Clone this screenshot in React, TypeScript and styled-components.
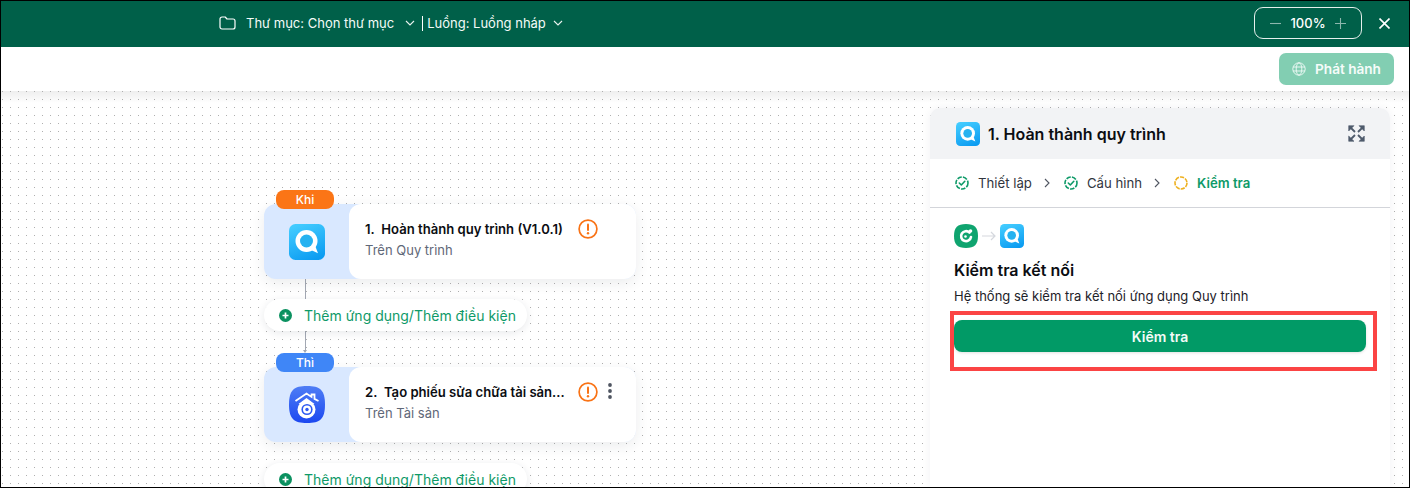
import React from "react";
import styled, { createGlobalStyle } from "styled-components";

const Global = createGlobalStyle`
  html, body { margin: 0; padding: 0; background: #fff; }
  body { font-family: Inter, "Noto Sans", "Liberation Sans", sans-serif; }
  * { box-sizing: border-box; }
`;

const Frame = styled.div`
  width: 1410px; height: 488px; border: 1px solid #000;
  display: flex; flex-direction: column; overflow: hidden; position: relative; background: #fff;
`;
const TopBar = styled.header`
  height: 46px; flex: none; background: #006049; color: #fff;
  display: flex; align-items: center; padding: 0 19px 2px 218px;
`;
const Crumb = styled.div`
  display: flex; align-items: center; font-size: 13px; line-height: 16px; white-space: nowrap; color: #f4fbf8;
`;
const CrumbText = styled.span<{ $ml: number }>`margin-left: ${p => p.$ml}px;`;
const Gap = styled.span<{ $w: number }>`width: ${p => p.$w}px;`;
const Divider = styled.span`width: 1px; height: 15px; background: #fff; margin: 0 4px 0 7px;`;
const Spacer = styled.div`flex: 1;`;
const Zoom = styled.div`
  width: 108px; height: 32px; border: 1px solid #e6efec; border-radius: 9px;
  display: flex; align-items: center; justify-content: space-between; padding: 0 15px;
  font-size: 13px; font-weight: 500; margin-right: 17px;
`;
const Faded = styled.span`display: flex; opacity: .55;`;
const ToolRow = styled.div`
  height: 44px; flex: none; background: #fff; display: flex; justify-content: flex-end; align-items: flex-start;
  padding: 6px 15px 0 0; position: relative; z-index: 2;
`;
const Publish = styled.button`
  width: 115px; height: 32px; border: 0; border-radius: 7px; background: #82ceb2; color: #f6fcfa;
  font: 600 13.6px Inter, sans-serif; display: flex; align-items: center; justify-content: center; gap: 9px; padding: 0;
`;
const Canvas = styled.main`
  flex: 1; position: relative; overflow: hidden;
  background-color: #fff;
  background-image:
    radial-gradient(circle at 0.5px 0.5px, #afafaf 0.6px, transparent 0.6px),
    linear-gradient(#eeeeee, #ffffff);
  background-size: 8px 8px, 100% 12px;
  background-position: 1px 0, 0 0;
  background-repeat: repeat, no-repeat;
`;
const Node = styled.section<{ $top: number }>`
  position: absolute; left: 263px; top: ${p => p.$top}px; width: 372px; height: 75px;
  background: #d9e8ff; border-radius: 12px; box-shadow: 0 4px 14px rgba(30,40,60,.09);
  display: flex;
`;
const NodeIcon = styled.div`width: 85px; flex: none; display: flex; align-items: center; justify-content: center;`;
const NodeBody = styled.div`
  flex: 1; background: #fff; border-radius: 12px; padding: 15px 0 0 16px; display: flex; position: relative;
`;
const NodeText = styled.div`width: 213px;`;
const NodeTitle = styled.div`
  font-size: 13.1px; font-weight: 600; line-height: 18px; color: #0b0d12; white-space: nowrap; padding-top: 1px;
`;
const NodeSub = styled.div`font-size: 13px; line-height: 16px; color: #5f6878; margin-top: 4px;`;
const NodeActions = styled.div`display: flex; align-items: flex-start; gap: 9px;`;
const Tag = styled.div<{ $bg: string }>`
  position: absolute; left: 12px; top: -14px; width: 58px; height: 19px; border-radius: 8px;
  background: ${p => p.$bg}; color: #fff; font-size: 12px; line-height: 19px; text-align: center; font-weight: 500;
`;
const AddPill = styled.div<{ $top: number }>`
  position: absolute; left: 263px; top: ${p => p.$top}px; width: 263px; height: 32px; border-radius: 16px;
  background: #fff; box-shadow: 0 2px 8px rgba(30,40,60,.1);
  display: flex; align-items: center; padding: 1px 0 0 15px; gap: 12px;
  font-size: 14px; color: #0e9a68; white-space: nowrap;
`;
const Connector = styled.div<{ $top: number; $h: number }>`
  position: absolute; left: 304px; top: ${p => p.$top}px; width: 1px; height: ${p => p.$h}px; background: #a3a8b3;
`;
const ArrowHead = styled.div`
  position: absolute; left: 302px; top: 259px; width: 0; height: 0;
  border-left: 2.5px solid transparent; border-right: 2.5px solid transparent; border-top: 3px solid #a3a8b3;
`;
const Panel = styled.aside`
  position: absolute; left: 929px; top: 17px; width: 460px; bottom: 0; background: #fff;
  border-radius: 10px 10px 0 0; box-shadow: 0 0 10px rgba(30,40,60,.06);
  display: flex; flex-direction: column;
`;
const PanelHead = styled.div`
  height: 51px; flex: none; background: #f2f3f5; border-radius: 10px 10px 0 0;
  display: flex; align-items: center; padding: 0 25px 0 26px; gap: 8px;
`;
const PanelTitle = styled.h2`margin: 0; flex: 1; font-size: 16px; font-weight: 600; color: #0b0d12;`;
const Steps = styled.nav`
  height: 49px; flex: none; border-bottom: 1px solid #d3d5da;
  display: flex; align-items: center; padding: 0 0 0 25px; font-size: 13.2px; color: #30353e;
`;
const Step = styled.span<{ $active?: boolean }>`
  display: flex; align-items: center; gap: 9px; white-space: nowrap;
  ${p => p.$active ? "color:#0e9a68;font-weight:600;" : ""}
`;
const Sep = styled.span`display: flex; margin: 0 14px 0 12px;`;
const PanelBody = styled.div`padding: 16px 24px 0; display: flex; flex-direction: column;`;
const Flow = styled.div`display: flex; align-items: center; gap: 4px; height: 24px;`;
const BodyTitle = styled.h3`margin: 11px 0 0; font-size: 16px; line-height: 22px; font-weight: 600; color: #0b0d12;`;
const BodyText = styled.p`margin: 6px 0 0; font-size: 13px; line-height: 18px; color: #1e2229;`;
const CheckWrap = styled.div`position: relative; margin-top: 15px;`;
const CheckButton = styled.button`
  width: 100%; height: 32px; border: 0; border-radius: 8px; background: #019a66; color: #f4fbf8;
  font: 600 14px Inter, sans-serif; display: block; box-shadow: 0 1px 3px rgba(0,0,0,.12);
`;
const Highlight = styled.div`
  position: absolute; left: -4px; right: -11px; top: -9px; height: 60px; border: 4px solid #fb4444; pointer-events: none;
`;

let uid = 0;
const QIcon = ({ size }: { size: number }) => {
  const id = React.useMemo(() => `q${uid++}`, []);
  return (
    <svg width={size} height={size} viewBox="0 0 36 36">
      <defs>
        <linearGradient id={id} x1="0.3" y1="0" x2="0.7" y2="1">
          <stop offset="0" stopColor="#42cbff" />
          <stop offset="1" stopColor="#0c9cf1" />
        </linearGradient>
      </defs>
      <rect width="36" height="36" rx="6.500" fill={`url(#${id})`} />
      <circle cx="17.500" cy="17" r="11" fill="#fff" />
      <path d="M22 26l7 3.300-2.800-7.300z" fill="#fff" />
      <circle cx="17.500" cy="17" r="6.500" fill="#26b2f0" />
    </svg>
  );
};

const GreenApp = () => (
  <svg width="24" height="24" viewBox="0 0 24 24">
    <path d="M12 0c8.500 0 12 3.500 12 12s-3.500 12-12 12S0 20.500 0 12 3.500 0 12 0z" fill="#0fa46f" />
    <path d="M15.500 8.500a5 5 0 1 0 1.500 4.500" fill="none" stroke="#fff" strokeWidth="2.600" strokeLinecap="round" />
    <circle cx="11.500" cy="12.500" r="1.300" fill="#fff" />
    <circle cx="16.500" cy="7" r="1.800" fill="#fff" />
  </svg>
);

const HouseIcon = () => (
  <svg width="36" height="37" viewBox="0 0 36 37">
    <defs>
      <linearGradient id="h1" x1="0" y1="0" x2="0" y2="1">
        <stop offset="0" stopColor="#4e7df5" />
        <stop offset="1" stopColor="#1c48f0" />
      </linearGradient>
    </defs>
    <path d="M18 0c13 0 18 4 18 18.500S31 37 18 37 0 33 0 18.500 5 0 18 0z" fill="url(#h1)" />
    <path d="M6.500 15L17.500 7.500l5 3.400V8.500h3v4.400l4 2.100" fill="none" stroke="#fff" strokeWidth="1.800" />
    <path d="M9.500 18L17.500 12l8 6z" fill="#fff" />
    <circle cx="17.500" cy="23.500" r="9" fill="#fff" />
    <circle cx="18" cy="23.500" r="5.600" fill="#2d59f2" />
    <circle cx="18" cy="23.500" r="4" fill="#fff" />
    <circle cx="18" cy="23.500" r="1.700" fill="#2d59f2" />
  </svg>
);

const Warn = () => (
  <svg width="20" height="20" viewBox="0 0 20 20">
    <circle cx="10" cy="10" r="8.900" fill="none" stroke="#f97316" strokeWidth="1.700" />
    <path d="M10 5.500v5.500" stroke="#f97316" strokeWidth="2" strokeLinecap="round" />
    <circle cx="10" cy="14.200" r="1.200" fill="#f97316" />
  </svg>
);

const Dots = () => (
  <svg width="6" height="18" viewBox="0 0 6 18">
    <circle cx="3" cy="3" r="1.900" fill="#4f5561" />
    <circle cx="3" cy="9" r="1.900" fill="#4f5561" />
    <circle cx="3" cy="15" r="1.900" fill="#4f5561" />
  </svg>
);

const Plus = () => (
  <svg width="13" height="13" viewBox="0 0 13 13">
    <circle cx="6.500" cy="6.500" r="6.500" fill="#0b9160" />
    <path d="M3.500 6.500h6M6.500 3.500v6" stroke="#fff" strokeWidth="1.700" />
  </svg>
);

const Chevron = () => (
  <svg width="10" height="6" viewBox="0 0 10 6" fill="none" stroke="#e9f3ef" strokeWidth="1.100">
    <path d="M1 1l4 4 4-4" />
  </svg>
);

const StepDone = () => (
  <svg width="14" height="14" viewBox="0 0 14 14" fill="none" stroke="#0e9a68" strokeWidth="1.600">
    <circle cx="7" cy="7" r="6" strokeDasharray="4.500 1.200" />
    <path d="M4.300 7l2 2 3.500-3.700" strokeLinecap="round" strokeLinejoin="round" />
  </svg>
);

const StepPending = () => (
  <svg width="14" height="14" viewBox="0 0 14 14" fill="none" stroke="#eeb01e" strokeWidth="1.600">
    <circle cx="7" cy="7" r="6" strokeDasharray="4.200 1.100" />
  </svg>
);

const StepSep = () => (
  <svg width="6" height="10" viewBox="0 0 6 10" fill="none" stroke="#4f5561" strokeWidth="1.100">
    <path d="M1 1l4 4-4 4" />
  </svg>
);

const Expand = () => (
  <svg width="17" height="17" viewBox="0 0 17 17" fill="#4f5b6b" stroke="#4f5b6b" strokeWidth="1.800">
    <path d="M7 7L2.500 2.500M10 7l4.500-4.500M7 10l-4.500 4.500M10 10l4.500 4.500" fill="none" />
    <path d="M.7.700h5.300L.7 6zM16.300.700H11L16.300 6zM.7 16.300H6L.7 11zM16.300 16.300H11L16.300 11z" strokeWidth="0.600" />
  </svg>
);

const Globe = () => (
  <svg width="14" height="14" viewBox="0 0 14 14" fill="none" stroke="#f1faf7" strokeWidth="0.900">
    <circle cx="7" cy="7" r="6.200" />
    <ellipse cx="7" cy="7" rx="2.800" ry="6.200" />
    <path d="M1 5h12M1 9h12" />
  </svg>
);

const Folder = () => (
  <svg width="17" height="14" viewBox="0 0 17 14" fill="none" stroke="#fff" strokeWidth="1.200" strokeLinejoin="round">
    <path d="M1 3a2 2 0 0 1 2-2h3.200l1.800 2h6a2 2 0 0 1 2 2v6a2 2 0 0 1-2 2H3a2 2 0 0 1-2-2z" />
  </svg>
);

export default function App() {
  return (
    <>
      <Global />
      <Frame>
        <TopBar>
          <Crumb>
            <Folder />
            <CrumbText $ml={10}>Thư mục: Chọn thư mục</CrumbText>
            <Gap $w={11} />
            <Chevron />
            <Divider />
            <CrumbText $ml={0}>Luồng: Luồng nháp</CrumbText>
            <Gap $w={7} />
            <Chevron />
          </Crumb>
          <Spacer />
          <Zoom>
            <Faded>
              <svg width="11" height="11" viewBox="0 0 11 11" stroke="#fff" strokeWidth="1.100"><path d="M0 5.500h11" /></svg>
            </Faded>
            <span>100%</span>
            <Faded>
              <svg width="11" height="11" viewBox="0 0 11 11" stroke="#fff" strokeWidth="1.100"><path d="M0 5.500h11M5.500 0v11" /></svg>
            </Faded>
          </Zoom>
          <svg width="11" height="11" viewBox="0 0 11 11" stroke="#fff" strokeWidth="1.600"><path d="M.5.500l10 10M10.500.500l-10 10" /></svg>
        </TopBar>
        <ToolRow>
          <Publish><Globe />Phát hành</Publish>
        </ToolRow>
        <Canvas>
          <Connector $top={188} $h={20} />
          <Connector $top={240} $h={20} />
          <ArrowHead />
          <Node $top={113}>
            <Tag $bg="#fb7516">Khi</Tag>
            <NodeIcon><QIcon size={36} /></NodeIcon>
            <NodeBody>
              <NodeText><NodeTitle>1.&nbsp; Hoàn thành quy trình (V1.0.1)</NodeTitle><NodeSub>Trên Quy trình</NodeSub></NodeText>
              <NodeActions><Warn /></NodeActions>
            </NodeBody>
          </Node>
          <AddPill $top={208}><Plus />Thêm ứng dụng/Thêm điều kiện</AddPill>
          <Node $top={276}>
            <Tag $bg="#3f86f7">Thì</Tag>
            <NodeIcon><HouseIcon /></NodeIcon>
            <NodeBody>
              <NodeText><NodeTitle>2.&nbsp; Tạo phiếu sửa chữa tài sản...</NodeTitle><NodeSub>Trên Tài sản</NodeSub></NodeText>
              <NodeActions><Warn /><Dots /></NodeActions>
            </NodeBody>
          </Node>
          <AddPill $top={372}><Plus />Thêm ứng dụng/Thêm điều kiện</AddPill>
          <Panel>
            <PanelHead>
              <QIcon size={24} />
              <PanelTitle>1. Hoàn thành quy trình</PanelTitle>
              <Expand />
            </PanelHead>
            <Steps>
              <Step><StepDone />Thiết lập</Step>
              <Sep><StepSep /></Sep>
              <Step><StepDone />Cấu hình</Step>
              <Sep><StepSep /></Sep>
              <Step $active><StepPending />Kiểm tra</Step>
            </Steps>
            <PanelBody>
              <Flow>
                <GreenApp />
                <svg width="14" height="10" viewBox="0 0 14 10" fill="none" stroke="#d5d8de" strokeWidth="1.200"><path d="M0 5h12.500M9 1l4 4-4 4" /></svg>
                <QIcon size={24} />
              </Flow>
              <BodyTitle>Kiểm tra kết nối</BodyTitle>
              <BodyText>Hệ thống sẽ kiểm tra kết nối ứng dụng Quy trình</BodyText>
              <CheckWrap>
                <CheckButton>Kiểm tra</CheckButton>
                <Highlight />
              </CheckWrap>
            </PanelBody>
          </Panel>
        </Canvas>
      </Frame>
    </>
  );
}
